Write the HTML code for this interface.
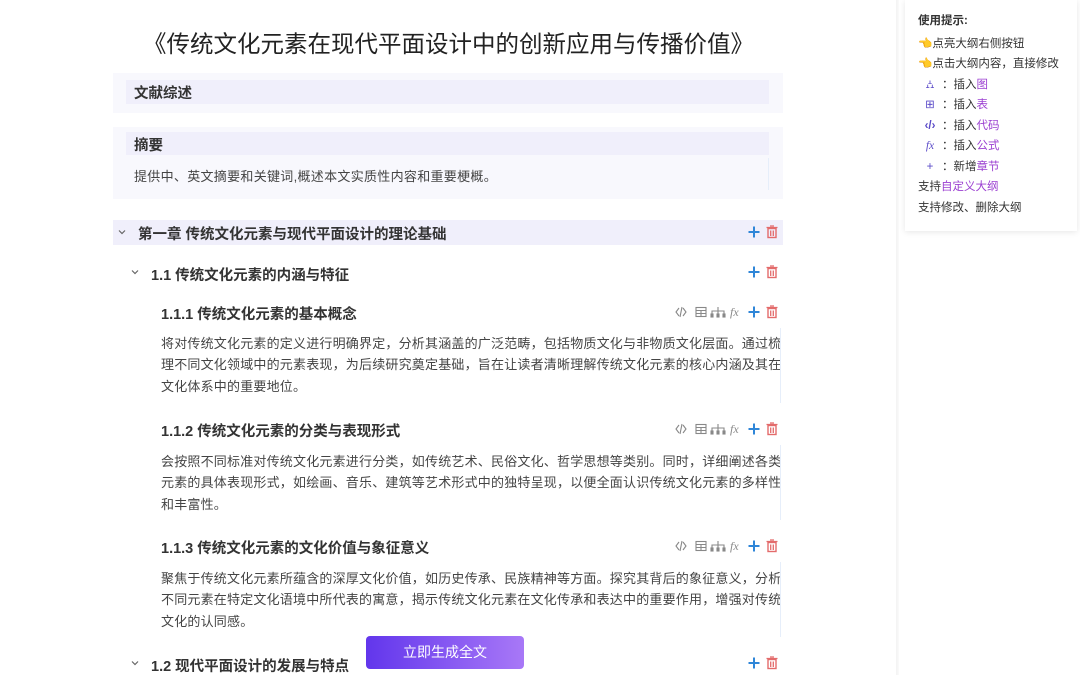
<!DOCTYPE html>
<html><head><meta charset="utf-8"><style>
*{margin:0;padding:0;box-sizing:border-box}
body{width:1080px;height:675px;overflow:hidden;background:#fff;font-family:"Liberation Sans","Noto Sans CJK SC",sans-serif;color:#333;position:relative}
.a{position:absolute;white-space:nowrap}
.title{left:0;width:897px;text-align:center;top:25px;font-size:23.5px;color:#222}
.h{font-weight:bold;font-size:14.5px;color:#333}
.p{font-size:13px;letter-spacing:.2px;line-height:21.4px;color:#444;white-space:normal;width:632px;left:161px}
.bar{position:absolute;background:#f0effb}
.side{position:absolute;left:905px;top:0;width:172px;height:231px;background:#fff;box-shadow:0 1px 6px rgba(0,0,0,.1);font-size:11.5px;color:#333;padding:12px 0 0 13px}
.side div{height:20.5px;white-space:nowrap}
.pu{color:#9b3fd1}
.vl{position:absolute;left:780px;width:1px;background:#e6eefa}
</style></head><body>
<div style="position:absolute;left:896px;top:0;width:3px;height:675px;background:linear-gradient(90deg,#f3f3f3,#fafafa)"></div>
<div class="a title">《传统文化元素在现代平面设计中的创新应用与传播价值》</div>

<div class="bar" style="left:113px;top:73px;width:670px;height:40px;background:#f8f8fd"></div>
<div class="bar" style="left:126px;top:80px;width:643px;height:24px"></div>
<div class="a h" style="left:134px;top:82px">文献综述</div>

<div class="bar" style="left:113px;top:127px;width:670px;height:72px;background:#f8f8fd"></div>
<div class="bar" style="left:126px;top:132px;width:643px;height:23px"></div>
<div class="a h" style="left:134px;top:134px">摘要</div>
<div class="a" style="left:134px;top:166px;font-size:13px;letter-spacing:.3px;color:#444">提供中、英文摘要和关键词,概述本文实质性内容和重要梗概。</div>
<div class="vl" style="left:768px;top:158px;height:32px"></div>

<div class="bar" style="left:113px;top:220px;width:670px;height:25px"></div>
<div class="a h" style="left:138px;top:223px">第一章 传统文化元素与现代平面设计的理论基础</div>

<div class="a h" style="left:151px;top:264px">1.1 传统文化元素的内涵与特征</div>

<div class="a h" style="left:161px;top:303px">1.1.1 传统文化元素的基本概念</div>
<div class="a p" style="top:333px">将对传统文化元素的定义进行明确界定，分析其涵盖的广泛范畴，包括物质文化与非物质文化层面。通过梳理不同文化领域中的元素表现，为后续研究奠定基础，旨在让读者清晰理解传统文化元素的核心内涵及其在文化体系中的重要地位。</div>
<div class="vl" style="top:328px;height:75px"></div>

<div class="a h" style="left:161px;top:420px">1.1.2 传统文化元素的分类与表现形式</div>
<div class="a p" style="top:451px">会按照不同标准对传统文化元素进行分类，如传统艺术、民俗文化、哲学思想等类别。同时，详细阐述各类元素的具体表现形式，如绘画、音乐、建筑等艺术形式中的独特呈现，以便全面认识传统文化元素的多样性和丰富性。</div>
<div class="vl" style="top:445px;height:75px"></div>

<div class="a h" style="left:161px;top:537px">1.1.3 传统文化元素的文化价值与象征意义</div>
<div class="a p" style="top:568px">聚焦于传统文化元素所蕴含的深厚文化价值，如历史传承、民族精神等方面。探究其背后的象征意义，分析不同元素在特定文化语境中所代表的寓意，揭示传统文化元素在文化传承和表达中的重要作用，增强对传统文化的认同感。</div>
<div class="vl" style="top:562px;height:75px"></div>

<div class="a h" style="left:151px;top:655px">1.2 现代平面设计的发展与特点</div>

<div style="position:absolute;left:366px;top:636px;width:158px;height:33px;border-radius:4px;background:linear-gradient(90deg,#6236ec,#a878f7);color:#fff;font-size:14px;text-align:center;line-height:33px">立即生成全文</div>

<svg width="1080" height="675" style="position:absolute;left:0;top:0;pointer-events:none">
<defs>
<g id="pl"><path d="M0 -5.5V5.5M-5.5 0H5.5" stroke="#2f86d8" stroke-width="2"/></g>
<g id="tr"><rect x="-4" y="-3.5" width="8" height="9" fill="none" stroke="#e36b6b" stroke-width="1.4"/><path d="M-5.5 -4.5H5.5M-2 -6H2M-1.3 -1.5V4M1.3 -1.5V4" stroke="#e36b6b" stroke-width="1.3"/></g>
<g id="ch"><path d="M-3 -1.5L0 1.5L3 -1.5" fill="none" stroke="#666" stroke-width="1.2"/></g>
<g id="tools" fill="none" stroke="#888" stroke-width="1.1">
<path d="M-2 -4L-5 0L-2 4M2 -4L5 0L2 4M1 -5L-1 5"/>
<rect x="15" y="-4.5" width="10" height="9"/><path d="M15 -1.5H25M15 1.5H25M20 -1.5V4.5"/>
<path d="M37 -5V-1M31 2V-1H43V2M37 -1V2"/><rect x="30" y="2" width="2" height="3" fill="#888"/><rect x="36" y="2" width="2" height="3" fill="#888"/><rect x="42" y="2" width="2" height="3" fill="#888"/>
<text x="49" y="4" font-family="Liberation Serif,serif" font-style="italic" font-size="12" fill="#888" stroke="none">fx</text>
</g>
</defs>
<use href="#ch" x="122" y="232"/><use href="#ch" x="135" y="272"/><use href="#ch" x="135" y="663"/>
<use href="#pl" x="754" y="232"/><use href="#tr" x="772" y="232"/>
<use href="#pl" x="754" y="272"/><use href="#tr" x="772" y="272"/>
<use href="#tools" x="681" y="312"/><use href="#pl" x="754" y="312"/><use href="#tr" x="772" y="312"/>
<use href="#tools" x="681" y="429"/><use href="#pl" x="754" y="429"/><use href="#tr" x="772" y="429"/>
<use href="#tools" x="681" y="546"/><use href="#pl" x="754" y="546"/><use href="#tr" x="772" y="546"/>
<use href="#pl" x="754" y="663"/><use href="#tr" x="772" y="663"/>
</svg>

<div class="side">
<div style="font-weight:bold;margin-bottom:2px">使用提示:</div>
<div><span style="color:#f0a020">👈</span>点亮大纲右侧按钮</div>
<div><span style="color:#f0a020">👈</span>点击大纲内容，直接修改</div>
<div><span style="color:#5b4bc8;display:inline-block;width:24px;text-align:center">⛼</span>：插入<span class="pu">图</span></div>
<div><span style="color:#5b4bc8;display:inline-block;width:24px;text-align:center">⊞</span>：插入<span class="pu">表</span></div>
<div><span style="color:#5b4bc8;display:inline-block;width:24px;text-align:center;font-weight:bold">‹/›</span>：插入<span class="pu">代码</span></div>
<div><span style="color:#5b4bc8;display:inline-block;width:24px;text-align:center;font-family:'Liberation Serif',serif;font-style:italic">fx</span>：插入<span class="pu">公式</span></div>
<div><span style="color:#5b4bc8;display:inline-block;width:24px;text-align:center">+</span>：新增<span class="pu">章节</span></div>
<div>支持<span class="pu">自定义大纲</span></div>
<div>支持修改、删除大纲</div>
</div>
</body></html>
